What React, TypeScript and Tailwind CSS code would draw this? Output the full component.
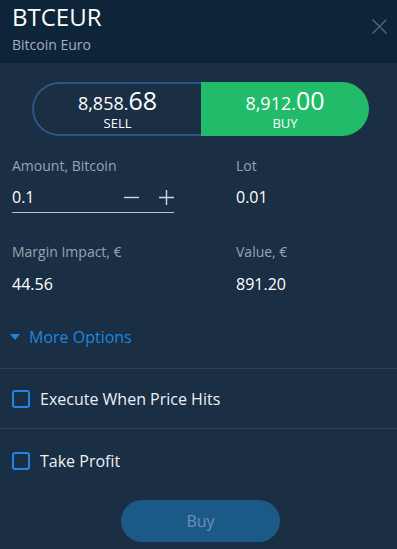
import React from "react";

function Checkbox() {
  return <div className="w-[18px] h-[18px] rounded-[3px] border-2 border-[#1f86e6] shrink-0" />;
}

export default function App() {
  return (
    <div
      className="w-[397px] h-[549px] bg-[#1a2e44] text-white overflow-hidden"
      style={{ fontFamily: "'Open Sans', 'Noto Sans', sans-serif" }}
    >
      <div className="h-[63px] bg-[#0d2439] flex justify-between pl-3 pr-[10px]">
        <div className="flex flex-col">
          <div className="text-[24px] leading-[33px] text-white">BTCEUR</div>
          <div className="mt-[2px] text-[14px] leading-[19px] text-[#a6b0bb]">Bitcoin Euro</div>
        </div>
        <svg className="mt-[19px]" width="15" height="15" viewBox="0 0 15 15" fill="none">
          <path d="M0.5 0.5 L14.5 14.5 M14.5 0.5 L0.5 14.5" stroke="#52677c" strokeWidth="1.4" />
        </svg>
      </div>

      <div className="mt-[19px] ml-[32px] w-[337px] h-[54px] flex">
        <div className="w-[169px] h-full rounded-l-full border-2 border-r-0 border-[#2c5685] flex flex-col items-center justify-center">
          <div className="flex items-baseline leading-none">
            <span className="text-[18px]">8,858.</span>
            <span className="text-[25px]">68</span>
          </div>
          <div className="text-[13px] leading-none mt-[4px]">SELL</div>
        </div>
        <div className="flex-1 h-full rounded-r-full bg-[#21bb6a] flex flex-col items-center justify-center">
          <div className="flex items-baseline leading-none">
            <span className="text-[18px]">8,912.</span>
            <span className="text-[25px]">00</span>
          </div>
          <div className="text-[13px] leading-none mt-[4px]">BUY</div>
        </div>
      </div>

      <div className="px-3 mt-[21px] grid grid-cols-[224px_1fr]">
        <div className="w-[162px]">
          <div className="text-[14px] leading-[18px] text-[#98a4b0]">Amount, Bitcoin</div>
          <div className="mt-[11px] pb-[4px] border-b border-[#b9c1c9] flex items-center">
            <span className="flex-1 text-[16px] leading-[22px]">0.1</span>
            <svg width="15" height="15" viewBox="0 0 15 15" className="mr-[20px]">
              <path d="M0 7.5 H15" stroke="#d3d9de" strokeWidth="1.4" />
            </svg>
            <svg width="15" height="15" viewBox="0 0 15 15">
              <path d="M0 7.5 H15 M7.5 0 V15" stroke="#d3d9de" strokeWidth="1.4" />
            </svg>
          </div>
        </div>
        <div>
          <div className="text-[14px] leading-[18px] text-[#98a4b0]">Lot</div>
          <div className="mt-[11px] text-[16px] leading-[22px]">0.01</div>
        </div>

        <div className="mt-[30px]">
          <div className="text-[14px] leading-[18px] text-[#98a4b0]">Margin Impact, €</div>
          <div className="mt-[12px] text-[16px] leading-[22px]">44.56</div>
        </div>
        <div className="mt-[30px]">
          <div className="text-[14px] leading-[18px] text-[#98a4b0]">Value, €</div>
          <div className="mt-[12px] text-[16px] leading-[22px]">891.20</div>
        </div>
      </div>

      <div className="mt-[31px] pb-[20px] border-b border-[#2b4157] px-[10px] flex items-center gap-[9px] text-[#1a87e0]">
        <svg width="10" height="6" viewBox="0 0 10 6">
          <path d="M0 0 H10 L5 6 Z" fill="#1a87e0" />
        </svg>
        <span className="text-[16px] leading-[22px]">More Options</span>
      </div>

      <div className="h-[60px] border-b border-[#2b4157] px-3 flex items-center gap-[10px]">
        <Checkbox />
        <span className="text-[16px] leading-[22px] text-[#eef1f4]">Execute When Price Hits</span>
      </div>

      <div className="h-[63px] px-3 flex items-center gap-[10px]">
        <Checkbox />
        <span className="text-[16px] leading-[22px] text-[#eef1f4]">Take Profit</span>
      </div>

      <div className="mt-[8px] ml-[121px] w-[159px] h-[42px] rounded-full bg-[#1b5a87] flex items-center justify-center text-[16px] text-[#6b90b2]">
        Buy
      </div>
    </div>
  );
}
